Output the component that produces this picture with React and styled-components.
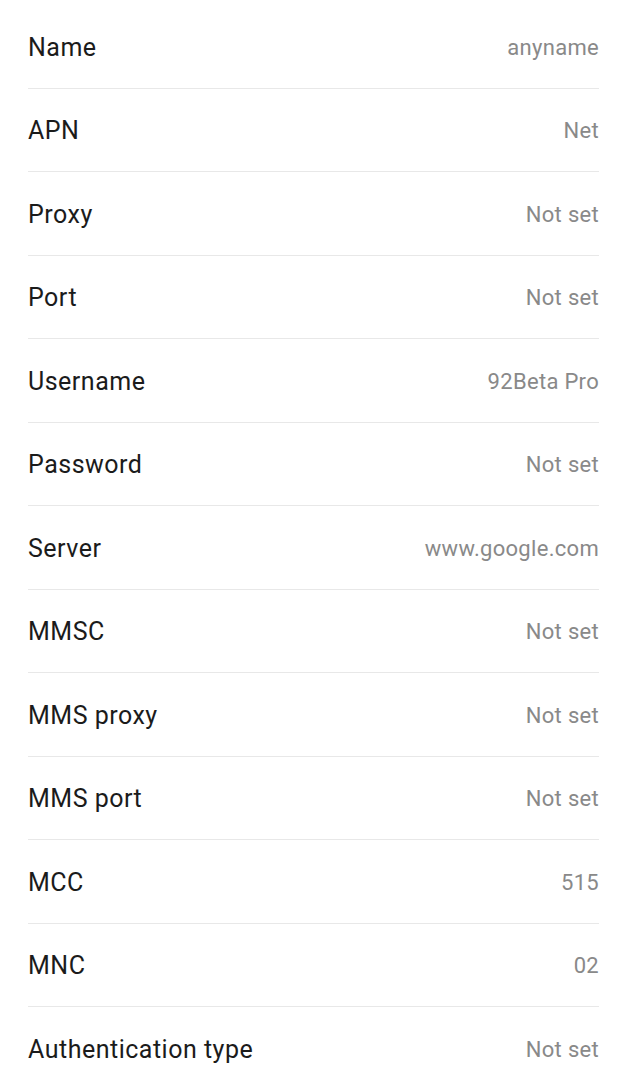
import styled, { createGlobalStyle } from 'styled-components'

const GlobalStyle = createGlobalStyle`
  body {
    margin: 0;
    background: #ffffff;
    font-family: Roboto, "Liberation Sans", sans-serif;
  }
`;

const List = styled.div`
  display: flex;
  flex-direction: column;
  padding: 5px 28px 0 28px;
`;

const Row = styled.div`
  display: flex;
  align-items: center;
  justify-content: space-between;
  height: 83.5px;
  padding-top: 2px;
  box-sizing: border-box;
  border-bottom: 1px solid #e8e8e8;
`;

const Label = styled.span`
  font-size: 25px;
  letter-spacing: 0.5px;
  color: #1b1b1b;
`;

const Value = styled.span`
  font-size: 22px;
  letter-spacing: 0.3px;
  color: #898989;
`;

const items = [
  ['Name', 'anyname'],
  ['APN', 'Net'],
  ['Proxy', 'Not set'],
  ['Port', 'Not set'],
  ['Username', '92Beta Pro'],
  ['Password', 'Not set'],
  ['Server', 'www.google.com'],
  ['MMSC', 'Not set'],
  ['MMS proxy', 'Not set'],
  ['MMS port', 'Not set'],
  ['MCC', '515'],
  ['MNC', '02'],
  ['Authentication type', 'Not set'],
];

export default function App() {
  return (
    <>
      <GlobalStyle />
      <List>
        {items.map(([label, value]) => (
          <Row key={label}>
            <Label>{label}</Label>
            <Value>{value}</Value>
          </Row>
        ))}
      </List>
    </>
  )
}
